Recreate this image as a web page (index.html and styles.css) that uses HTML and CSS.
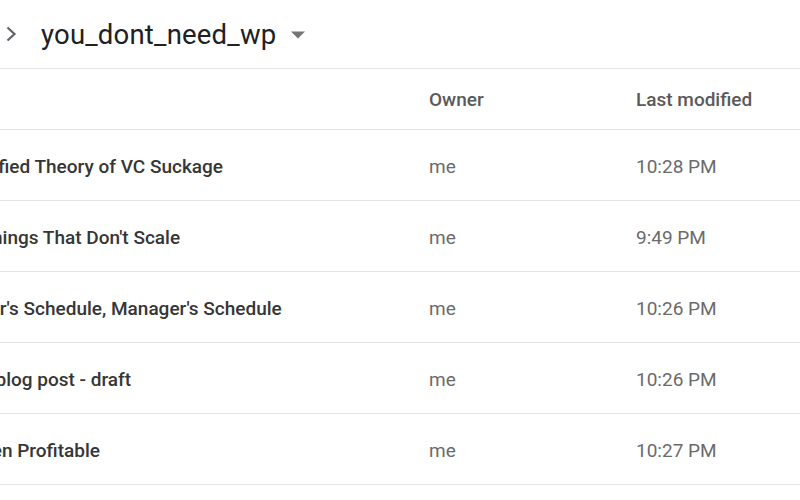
FILE: index.html
```html
<!DOCTYPE html>
<html>
<head>
<meta charset="utf-8">
<link rel="stylesheet" href="styles.css">
</head>
<body>
<div class="topbar">
  <svg class="chev" width="14" height="16" viewBox="0 0 14 16"><polyline points="2.5,1.5 9.5,8 2.5,14.5" fill="none" stroke="#5f6368" stroke-width="2.2"/></svg>
  <span class="title">you_dont_need_wp</span>
  <svg class="drop" width="14" height="8" viewBox="0 0 14 8"><polygon points="0,0.5 14,0.5 7,7.5" fill="#757575"/></svg>
</div>
<div class="list">
  <div class="row head">
    <div class="name"></div>
    <div class="owner">Owner</div>
    <div class="mod">Last modified</div>
  </div>
  <div class="row">
    <div class="name">A Unified Theory of VC Suckage</div>
    <div class="owner">me</div>
    <div class="mod">10:28 PM</div>
  </div>
  <div class="row">
    <div class="name">Do Things That Don't Scale</div>
    <div class="owner">me</div>
    <div class="mod">9:49 PM</div>
  </div>
  <div class="row">
    <div class="name">Maker's Schedule, Manager's Schedule</div>
    <div class="owner">me</div>
    <div class="mod">10:26 PM</div>
  </div>
  <div class="row">
    <div class="name">New blog post - draft</div>
    <div class="owner">me</div>
    <div class="mod">10:26 PM</div>
  </div>
  <div class="row">
    <div class="name">Ramen Profitable</div>
    <div class="owner">me</div>
    <div class="mod">10:27 PM</div>
  </div>
</div>
</body>
</html>
```
FILE: styles.css
```css
html, body {
  margin: 0;
  padding: 0;
  background: #ffffff;
  overflow: hidden;
  font-family: Roboto, "Liberation Sans", sans-serif;
}
.topbar {
  height: 68px;
  border-bottom: 1px solid #e3e3e3;
  display: flex;
  align-items: center;
  padding-left: 5px;
}
.chev {
  display: block;
}
.title {
  margin-left: 22px;
  font-size: 27.5px;
  color: #202124;
  letter-spacing: 0.2px;
}
.drop {
  display: block;
  margin-left: 15px;
  margin-top: 2px;
}
.list {
  margin-left: -47px;
}
.row {
  display: grid;
  grid-template-columns: 476px 207px 1fr;
  align-items: center;
  height: 71px;
  padding-top: 2px;
  box-sizing: border-box;
  border-bottom: 1px solid #e3e3e3;
  font-size: 19px;
  white-space: nowrap;
}
.row.head {
  height: 61px;
  padding-top: 0;
  font-weight: 500;
}
.name {
  font-weight: 500;
  color: #363636;
  overflow: hidden;
}
.owner, .mod {
  color: #6b6b6b;
}
.head .owner, .head .mod {
  color: #5a5a5a;
}
```
